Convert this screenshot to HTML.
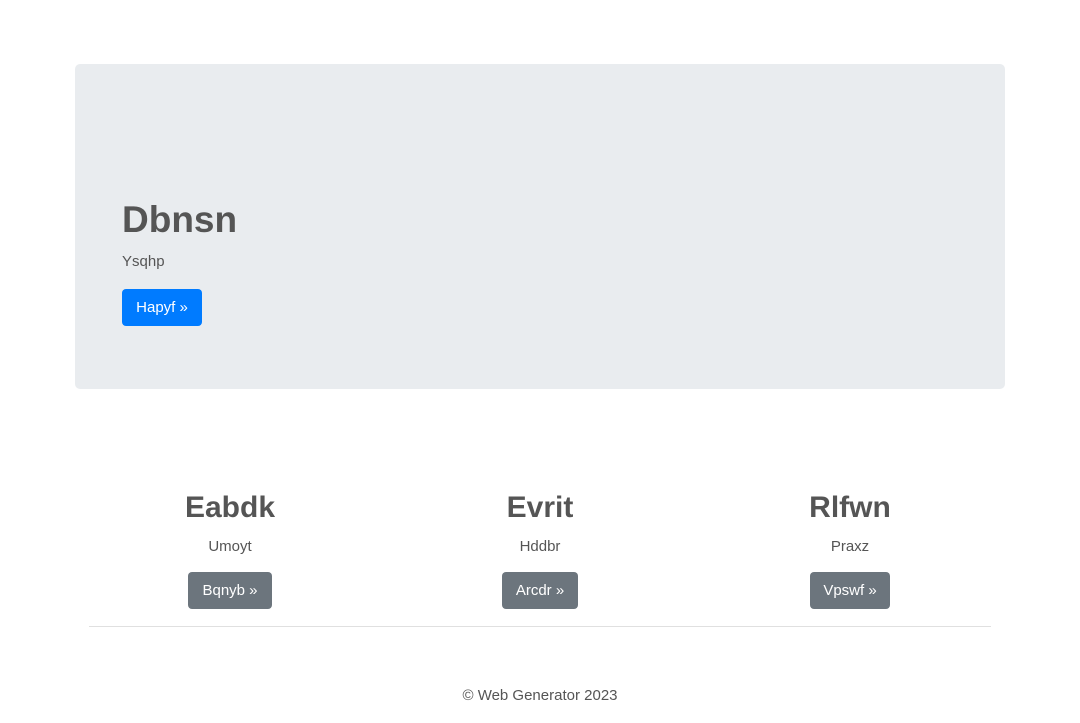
<!DOCTYPE html>
<html><head><meta charset="utf-8"><style>
*{box-sizing:border-box;margin:0;padding:0}
body{width:1080px;height:723px;background:#fff;font-family:"Liberation Sans",sans-serif;color:#555;font-size:15px;position:relative;overflow:hidden}
.jumbo{position:absolute;left:75px;top:64px;width:930px;height:325px;background:#e9ecef;border-radius:5px}
.jumbo h1{position:absolute;left:47px;top:132px;font-size:37px;font-weight:bold;line-height:48px;color:#555}
.jumbo p{position:absolute;left:47px;top:188px;font-size:15px;line-height:20px}
.btn{position:absolute;height:37px;line-height:38px;color:#fff;border-radius:4px;font-size:15px;text-align:center}
.blue{background:#007bff}
.gray{background:#6c757d}
.col{position:absolute;top:487px;width:300px;text-align:center}
.col h2{font-size:30px;font-weight:bold;line-height:42px;color:#555}
.col p{margin-top:8px;font-size:15px;line-height:20px}
hr{position:absolute;left:89px;top:626px;width:902px;border:0;border-top:1px solid #e0e0e0}
.foot{position:absolute;top:686px;width:100%;text-align:center;font-size:15px;line-height:20px}
</style></head><body>
<div class="jumbo"><h1>Dbnsn</h1><p>Ysqhp</p><div class="btn blue" style="left:47px;top:225px;width:80px">Hapyf »</div></div>
<div class="col" style="left:80px"><h2>Eabdk</h2><p>Umoyt</p></div>
<div class="col" style="left:390px"><h2>Evrit</h2><p>Hddbr</p></div>
<div class="col" style="left:700px"><h2>Rlfwn</h2><p>Praxz</p></div>
<div class="btn gray" style="left:188px;top:572px;width:84px">Bqnyb »</div>
<div class="btn gray" style="left:502px;top:572px;width:76px">Arcdr »</div>
<div class="btn gray" style="left:810px;top:572px;width:80px">Vpswf »</div>
<hr>
<div class="foot">© Web Generator 2023</div>
</body></html>
